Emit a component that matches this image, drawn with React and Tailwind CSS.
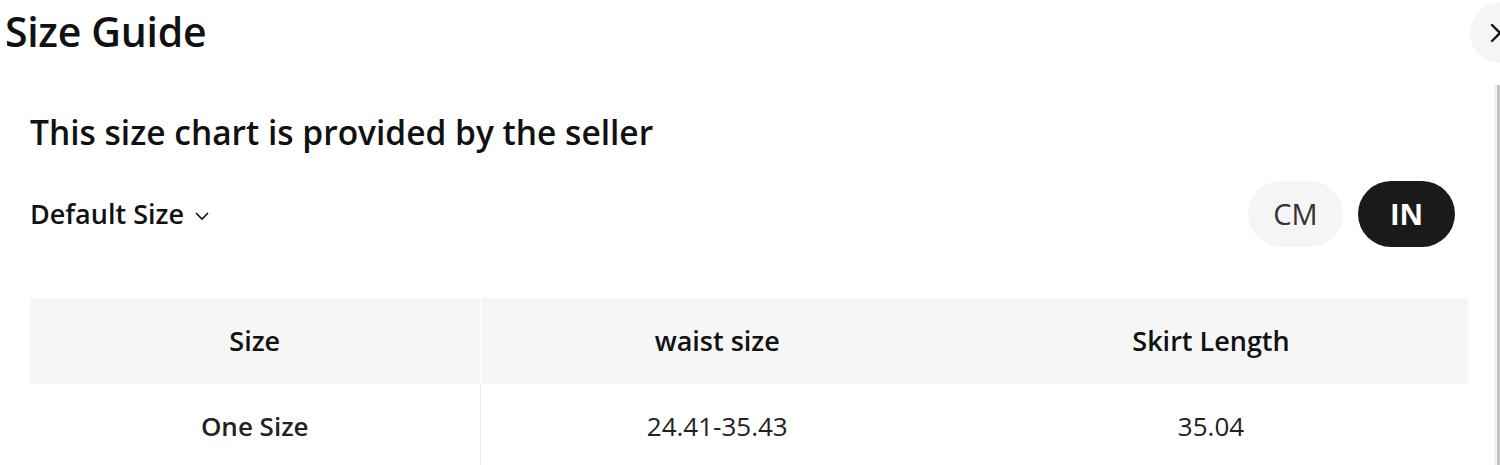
import React, { useState } from "react";

const rows = [{ size: "One Size", waist: "24.41-35.43", length: "35.04" }];

export default function App() {
  const [unit, setUnit] = useState("IN");

  return (
    <div
      className="relative w-[1500px] h-[465px] overflow-hidden bg-white text-[#111]"
      style={{ fontFamily: '"Open Sans", "Noto Sans", Arial, sans-serif' }}
    >
      {/* close button, cut off by the edge */}
      <button className="absolute right-[-30px] top-[3px] w-[60px] h-[60px] rounded-full bg-[#f5f5f5] flex items-center pl-[18px]">
        <svg width="24" height="24" viewBox="0 0 24 24" fill="none" stroke="#111" strokeWidth="2.4" strokeLinecap="round">
          <path d="M4 4l16 16M20 4L4 20" />
        </svg>
      </button>
      {/* scrollbar track */}
      <div className="absolute right-0 top-[85px] bottom-0 w-[6px] bg-[#f1f1f1] border-r-[3px] border-[#c4c4c4]" />

      <h1 className="pl-[5px] pt-[6px] text-[41px] leading-[50px] font-semibold tracking-[-0.3px]">Size Guide</h1>

      <div className="pl-[30px] pr-[32px]">
        <h2 className="mt-[54px] text-[33.5px] leading-[44px] font-semibold">This size chart is provided by the seller</h2>

        <div className="mt-[27px] flex items-center justify-between">
          <button className="flex items-center gap-[10px] text-[27px] font-semibold">
            Default Size
            <svg width="16" height="16" viewBox="0 0 16 16" fill="none" stroke="#111" strokeWidth="1.6" className="mt-[3px]">
              <path d="M2 5l6 6 6-6" />
            </svg>
          </button>
          <div className="flex gap-[15px] mr-[13px]">
            {["CM", "IN"].map((u) => (
              <button
                key={u}
                onClick={() => setUnit(u)}
                className={
                  unit === u
                    ? "w-[97px] h-[66px] rounded-full bg-[#1a1a1a] text-white text-[29px] font-bold"
                    : "w-[95px] h-[66px] rounded-full bg-[#f5f5f5] text-[#333] text-[29px]"
                }
              >
                {u}
              </button>
            ))}
          </div>
        </div>

        <table className="mt-[51px] w-[1438px] border-collapse table-fixed text-[26px]">
          <colgroup>
            <col className="w-[450px]" />
            <col className="w-[474px]" />
            <col />
          </colgroup>
          <thead>
            <tr className="bg-[#f6f6f6] h-[86px]">
              <th className="font-semibold text-[27px] border-r border-white">Size</th>
              <th className="font-semibold text-[27px]">waist size</th>
              <th className="font-semibold text-[27px]">Skirt Length</th>
            </tr>
          </thead>
          <tbody>
            {rows.map((r) => (
              <tr key={r.size} className="h-[84px]">
                <td className="text-center font-semibold text-[#222] border-r border-[#ececec]">{r.size}</td>
                <td className="text-center text-[#222]">{r.waist}</td>
                <td className="text-center text-[#222]">{r.length}</td>
              </tr>
            ))}
          </tbody>
        </table>
      </div>
    </div>
  );
}
